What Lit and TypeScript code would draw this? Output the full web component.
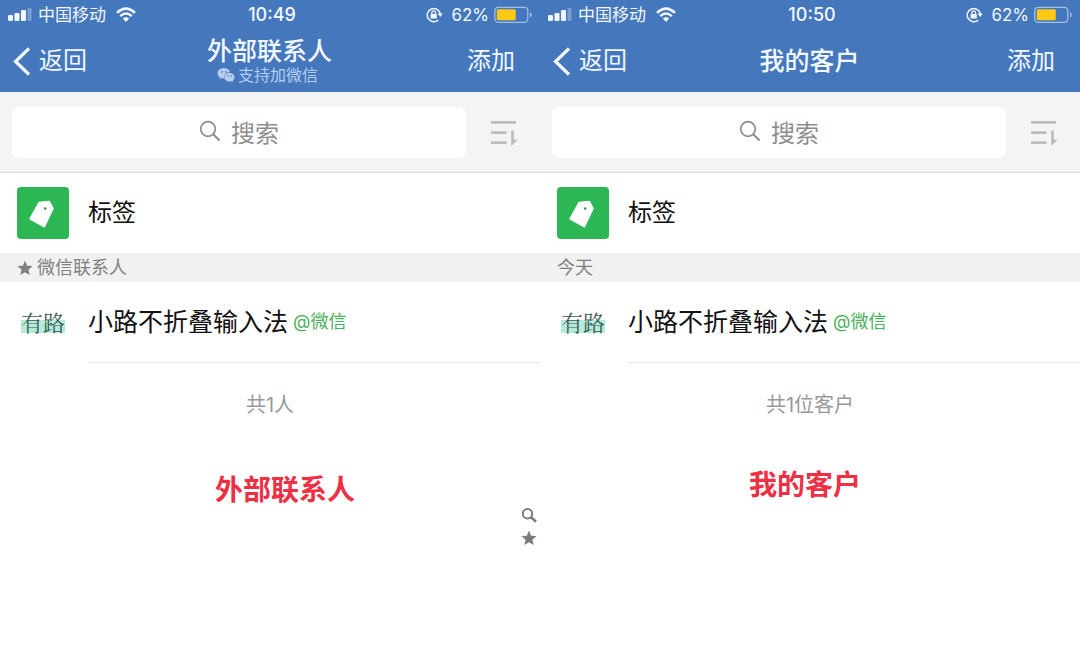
import { LitElement, html, css, svg, nothing } from "lit";
import { customElement, property } from "lit/decorators.js";
import { classMap } from "lit/directives/class-map.js";

const star = html`<svg class="star" width="16" height="16" viewBox="0 0 16 16" aria-hidden="true">
  <path fill="currentColor" d="M8 .6l2.100 5.100 5.500.4-4.200 3.600 1.300 5.400L8 12.200l-4.700 2.900 1.300-5.400L.4 6.100l5.500-.4z" />
</svg>`;

const arc = (d: string) =>
  svg`<path d=${d} fill="none" stroke="currentColor" stroke-width="2.500" />`;

@customElement("status-bar")
export class StatusBar extends LitElement {
  @property() time = "";

  static styles = css`
    :host {
      display: grid;
      grid-template-columns: 1fr auto 1fr;
      align-items: center;
      height: 30px;
      padding: 0 8px;
      color: #f2f8ff;
      font-size: 17px;
      line-height: 24px;
    }
    .side {
      display: flex;
      align-items: center;
    }
    .end {
      justify-content: flex-end;
    }
    .carrier {
      margin: 0 10px 0 6px;
    }
    .time {
      padding-left: 4px;
      font-size: 18px;
      font-weight: 500;
    }
    .percent {
      margin: 0 5px 0 8px;
      font-size: 17px;
    }
    svg {
      display: block;
      flex: none;
    }
  `;

  render() {
    return html`
      <div class="side">
        <svg width="24" height="14" viewBox="0 0 24 14" fill="currentColor" aria-hidden="true">
          <rect x="0" y="7" width="5" height="6" rx="1.200" />
          <rect x="6.500" y="5" width="5" height="8" rx="1.200" />
          <rect x="13" y="2" width="5" height="11" rx="1.200" />
          <rect x="19.500" y="0" width="4" height="13" rx="1.200" opacity=".3" />
        </svg>
        <span class="carrier">中国移动</span>
        <svg width="20" height="16" viewBox="0 0 20 16" aria-hidden="true">
          ${arc("M1 5.800Q10-2.600 19 5.800")} ${arc("M4.300 9.200Q10 3.900 15.700 9.200")}
          <path d="M6.800 11.600Q10 8.800 13.200 11.600L10 15z" fill="currentColor" />
        </svg>
      </div>
      <span class="time">${this.time}</span>
      <div class="side end">
        <svg width="17" height="16" viewBox="0 0 17 16" aria-hidden="true">
          <path d="M12.300 13A6.600 6.600 0 1 1 14.300 6.800" fill="none" stroke="currentColor" stroke-width="1.500" />
          <path d="M11.500 6.400h5.300l-2.500 3.600z" fill="currentColor" />
          <rect x="4.600" y="7" width="6.200" height="4.600" rx=".6" fill="currentColor" />
          <path d="M5.900 7V5.600a1.800 1.800 0 0 1 3.600 0V7" fill="none" stroke="currentColor" stroke-width="1.300" />
        </svg>
        <span class="percent">62%</span>
        <svg width="38" height="18" viewBox="0 0 38 18" aria-hidden="true">
          <rect x=".8" y="1.300" width="33" height="15" rx="3.500" fill="none" stroke="#a3bfe6" stroke-width="1.300" />
          <rect x="2.800" y="3.300" width="19" height="11" rx="1.500" fill="#fbc916" />
          <path d="M36 6.200q1.800.5 1.800 2.600T36 11.400z" fill="#a3bfe6" />
        </svg>
      </div>
    `;
  }
}

@customElement("phone-screen")
export class PhoneScreen extends LitElement {
  @property() time = "";
  @property() heading = "";
  @property() subtitle = "";
  @property() section = "";
  @property() total = "";
  @property({ type: Boolean }) starred = false;

  static styles = css`
    :host {
      display: flex;
      flex-direction: column;
      position: relative;
      min-width: 0;
      background: #fff;
    }
    header {
      background: #4577bc;
      color: #f2f8ff;
    }
    svg {
      display: block;
      flex: none;
    }
    button {
      border: 0;
      padding: 0;
      background: none;
      color: inherit;
      font: inherit;
      cursor: pointer;
    }
    .nav {
      display: grid;
      grid-template-columns: 1fr auto 1fr;
      align-items: center;
      height: 62px;
      padding: 0 25px 0 12px;
      font-size: 24px;
      line-height: 28px;
    }
    .back {
      display: flex;
      align-items: center;
      gap: 7px;
      justify-self: start;
    }
    .add {
      justify-self: end;
    }
    .titles {
      display: flex;
      flex-direction: column;
      align-items: center;
      margin-left: 12px;
    }
    h1 {
      margin: 0;
      font-size: 25px;
      line-height: 28px;
      font-weight: 500;
    }
    .subtitle {
      display: flex;
      align-items: center;
      gap: 3px;
      padding-right: 4px;
      color: #b4cdf0;
      font-size: 16px;
      line-height: 20px;
    }
    .search {
      display: flex;
      align-items: center;
      gap: 24px;
      padding: 15px 21px 14px 12px;
      border-bottom: 1px solid #dcdcdc;
      background: #f4f4f4;
      color: #8e8e8e;
    }
    .box {
      box-sizing: border-box;
      display: flex;
      flex: 1;
      align-items: center;
      justify-content: center;
      gap: 10px;
      height: 51px;
      padding-bottom: 3px;
      border-radius: 7px;
      background: #fff;
    }
    .box input {
      field-sizing: content;
      border: 0;
      padding: 0;
      outline: 0;
      background: none;
      color: inherit;
      font: inherit;
      font-size: 24px;
      line-height: 32px;
    }
    .box input::placeholder {
      color: #8e8e8e;
      opacity: 1;
    }
    .sort {
      color: #bcbcbc;
    }
    .row {
      display: flex;
      align-items: center;
      height: 80px;
      padding-left: 17px;
      gap: 19px;
      color: #111;
      font-size: 25px;
      line-height: 32px;
      text-decoration: none;
    }
    .icon {
      display: grid;
      place-items: center;
      flex: none;
      width: 52px;
      height: 52px;
      border-radius: 4px;
      background: #2cb754;
    }
    .tag {
      font-size: 24px;
    }
    h2 {
      display: flex;
      align-items: center;
      gap: 4px;
      height: 29px;
      margin: 0;
      padding-left: 17px;
      background: #f1f1f1;
      color: #808080;
      font-size: 18px;
      line-height: 24px;
      font-weight: 400;
    }
    .avatar {
      width: 52px;
      flex: none;
      text-align: center;
      color: #3f5b55;
      font-family: "Noto Serif CJK SC", "Liberation Serif", "Noto Sans CJK SC", serif;
      font-size: 22px;
      line-height: 24px;
    }
    .avatar span {
      background: linear-gradient(transparent 46%, #b4ecdc 46%, #b4ecdc 88%, transparent 88%);
    }
    .contact {
      display: flex;
      align-items: center;
      gap: 5px;
      flex: 1;
      height: 80px;
      border-bottom: 1px solid #e6e6e6;
    }
    .source {
      color: #4bb15c;
      font-size: 18px;
    }
    .total {
      margin: 29px 0 0;
      text-align: center;
      color: #999;
      font-size: 20px;
      line-height: 28px;
    }
    .note {
      margin: 48px 0 0;
      padding-left: 209px;
      color: #ee2f44;
      font-size: 28px;
      line-height: 36px;
      font-weight: 700;
    }
    .note.low {
      margin-top: 53px;
      padding-left: 215px;
    }
    .index {
      position: absolute;
      top: 507px;
      right: 3px;
      display: grid;
      gap: 7px;
      color: #7c7c7c;
    }
  `;

  render() {
    return html`
      <header>
        <status-bar time=${this.time}></status-bar>
        <div class="nav">
          <button class="back">
            <svg width="20" height="30" viewBox="0 0 20 30" aria-hidden="true">
              <path d="M17 2.500L3.500 15.500 17 28.500" fill="none" stroke="currentColor" stroke-width="3.200" />
            </svg>
            返回
          </button>
          <div class="titles">
            <h1>${this.heading}</h1>
            ${this.subtitle
              ? html`<div class="subtitle">
                  <svg width="18" height="16" viewBox="0 0 18 16" aria-hidden="true">
                    <path fill="currentColor" d="M6.800 1C3.300 1 .5 3.300.5 6.200c0 1.600.9 3 2.300 4L2.200 12l2.200-1.100c.7.200 1.500.4 2.400.4h.6C6.600 7.800 9 5.200 13 5.200 12.500 2.800 9.900 1 6.800 1z" />
                    <path fill="currentColor" d="M12.500 6c-3 0-5.200 1.900-5.200 4.300s2.300 4.300 5.200 4.300c.6 0 1.200-.1 1.800-.3l1.700.9-.4-1.500c1.200-.8 2-2 2-3.400C17.600 7.900 15.300 6 12.500 6z" />
                    <g fill="#4577bc">
                      <circle cx="4.800" cy="4.900" r=".8" />
                      <circle cx="8.900" cy="4.900" r=".8" />
                      <circle cx="10.900" cy="9" r=".7" />
                      <circle cx="14.300" cy="9" r=".7" />
                    </g>
                  </svg>
                  ${this.subtitle}
                </div>`
              : nothing}
          </div>
          <button class="add">添加</button>
        </div>
      </header>
      <div class="search">
        <label class="box">
          <svg width="22" height="22" viewBox="0 0 22 22" fill="none" stroke="currentColor" aria-hidden="true">
            <circle cx="9" cy="9" r="7.300" stroke-width="1.700" />
            <path d="M14.200 14.200L20.500 20.500" stroke-width="2.100" />
          </svg>
          <input type="text" placeholder="搜索" aria-label="搜索" />
        </label>
        <button class="sort" aria-label="排序">
          <svg width="29" height="28" viewBox="0 0 29 28" fill="currentColor" aria-hidden="true">
            <path d="M1 2h25v2.700H1zM1 12.200h15.500v2.700H1zM1 22.200h15.500v2.700H1zM21.200 11.500h2.700v9.300h4l-6.700 6.200z" />
          </svg>
        </button>
      </div>
      <a class="row tag" href="#tags">
        <span class="icon">
          <svg width="28" height="30" viewBox="0 0 28 30" aria-hidden="true">
            <path fill="#fff" stroke="#fff" stroke-width="1.500" stroke-linejoin="round" d="M10 4.600L20.200 3.400 24 10.400 15.400 28.800 1 20.800z" />
            <circle cx="16.200" cy="10.500" r="1.200" fill="#2c8a50" />
          </svg>
        </span>
        标签
      </a>
      <h2>${this.starred ? star : nothing}${this.section}</h2>
      <a class="row" href="#contact">
        <span class="avatar"><span>有路</span></span>
        <span class="contact">小路不折叠输入法 <span class="source">@微信</span></span>
      </a>
      <p class="total">${this.total}</p>
      <p class=${classMap({ note: true, low: this.starred })}>${this.heading}</p>
      ${this.starred
        ? html`<div class="index">
            <svg width="16" height="16" viewBox="0 0 16 16" fill="none" stroke="currentColor" aria-hidden="true">
              <circle cx="6.500" cy="6.700" r="4.700" stroke-width="2" />
              <path d="M10 10.200L15 14.700" stroke-width="2.600" />
            </svg>
            ${star}
          </div>`
        : nothing}
    `;
  }
}

@customElement("app-root")
export class AppRoot extends LitElement {
  static styles = css`
    :host {
      display: grid;
      grid-template-columns: 1fr 1fr;
      min-height: 100vh;
      background: #fff;
      font-family: Inter, "Noto Sans CJK SC", sans-serif;
    }
  `;

  render() {
    return html`
      <phone-screen
        time="10:49"
        heading="外部联系人"
        subtitle="支持加微信"
        section="微信联系人"
        total="共1人"
        starred
      ></phone-screen>
      <phone-screen time="10:50" heading="我的客户" section="今天" total="共1位客户"></phone-screen>
    `;
  }
}
